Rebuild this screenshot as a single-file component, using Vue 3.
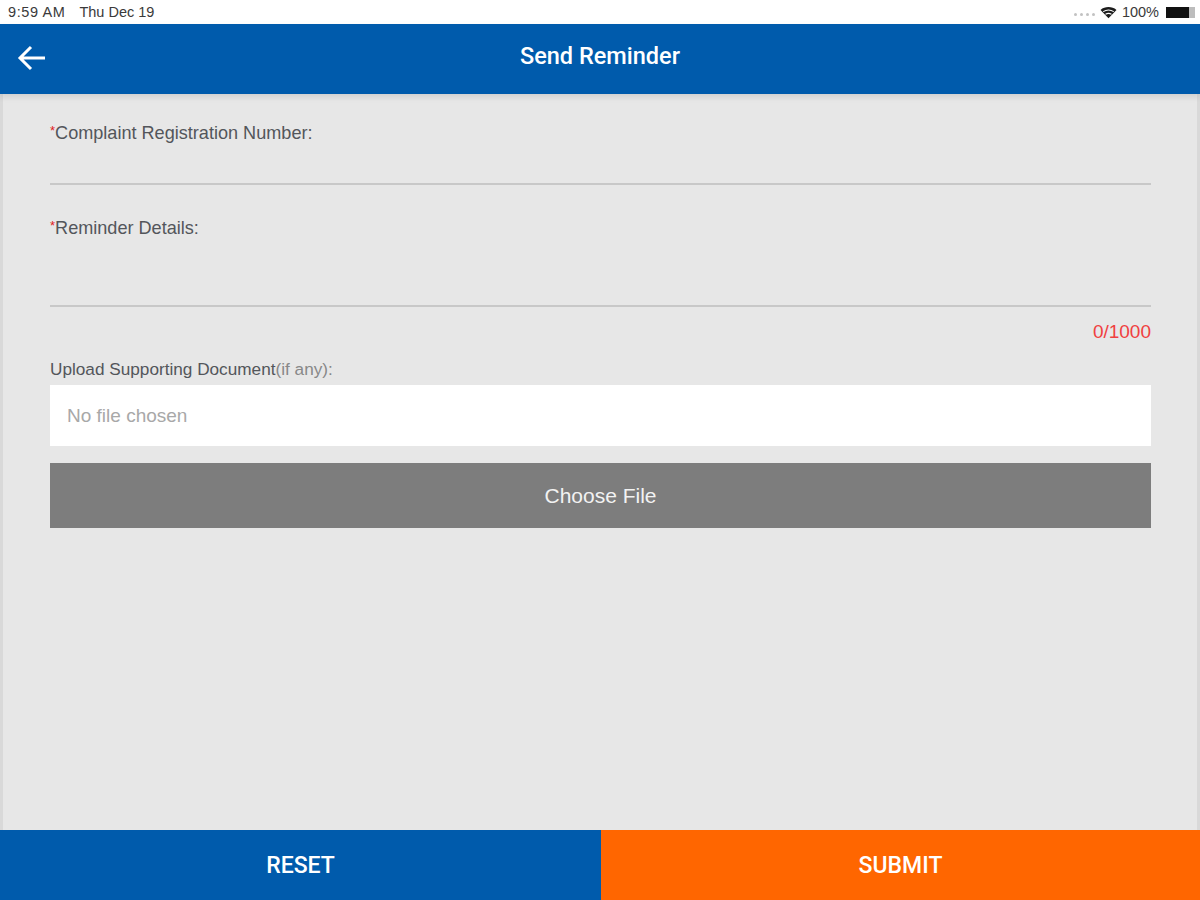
<template>
<div class="screen">
    <div class="status-bar">
        <div class="status-left">
            <span class="time">9:59 AM</span>
            <span>Thu Dec 19</span>
        </div>
        <div class="status-right">
            <span class="signal">
                <i v-for="n in 4" :key="n"></i>
            </span>
            <svg class="wifi" width="17" height="13" viewBox="0 0 16 12">
                <path d="M8 11.5 L0.5 3.6 C4.6 0 11.4 0 15.5 3.6 Z" fill="#1c1c1c" />
                <path d="M3 5.2 C6 3.4 10 3.4 13 5.2" stroke="#fff" stroke-width="1" fill="none" />
                <path d="M5.2 7.6 C7 6.6 9 6.6 10.8 7.6" stroke="#fff" stroke-width="1" fill="none" />
            </svg>
            <span class="percent">100%</span>
            <span class="battery"></span>
        </div>
    </div>

    <header class="top-bar">
        <svg class="back" width="30" height="28" viewBox="0 0 30 28">
            <path d="M28 14 H3 M14 3 L3 14 L14 25" stroke="#fff" stroke-width="3" fill="none" />
        </svg>
        <h1>Send Reminder</h1>
    </header>

    <main class="form">
        <div class="field first">
            <label><b>*</b>Complaint Registration Number:</label>
            <div class="line"></div>
        </div>
        <div class="field second">
            <label><b>*</b>Reminder Details:</label>
            <div class="line"></div>
        </div>
        <p class="counter">0/1000</p>
        <p class="upload-label">Upload Supporting Document<span>(if any):</span></p>
        <div class="file-box">No file chosen</div>
        <button class="choose">Choose File</button>
    </main>

    <footer class="actions">
        <button class="reset">RESET</button>
        <button class="submit">SUBMIT</button>
    </footer>
</div>
</template>

<script setup>
</script>

<style scoped>
.screen {
    width: 1200px;
    height: 900px;
    display: flex;
    flex-direction: column;
    background: #e7e7e7;
    font-family: "Liberation Sans", Arial, sans-serif;
    overflow: hidden;
}

.status-bar {
    height: 24px;
    background: #fff;
    display: flex;
    justify-content: space-between;
    align-items: center;
    padding: 0 5px 0 8px;
    font-size: 14.5px;
    color: #3a3a3a;
    flex-shrink: 0;
}

.status-left {
    display: flex;
    gap: 14px;
}

.time {
    letter-spacing: 0.6px;
}

.status-right {
    display: flex;
    align-items: center;
    gap: 5px;
}

.signal {
    display: flex;
    gap: 3px;
    margin-top: 5px;
}

.signal i {
    width: 3px;
    height: 3px;
    background: #c2c2c2;
    border-radius: 50%;
}

.percent {
    margin-right: 2px;
}

.battery {
    width: 29px;
    height: 11px;
    background: #111;
    border-right: 6px solid #bdbdbd;
    box-sizing: border-box;
}

.top-bar {
    height: 70px;
    background: #005bac;
    display: flex;
    align-items: center;
    justify-content: center;
    position: relative;
    box-shadow: 0 3px 6px rgba(0, 0, 0, 0.1);
    flex-shrink: 0;
}

.top-bar h1 {
    margin: 0 0 6px;
    color: #fff;
    font-family: Roboto, sans-serif;
    font-size: 23.5px;
    font-weight: 500;
}

.back {
    position: absolute;
    left: 17px;
    top: 20px;
}

.form {
    flex: 1;
    padding: 0 46px 0 47px;
    border-left: 3px solid #d9d9d9;
    border-right: 3px solid #d9d9d9;
    display: flex;
    flex-direction: column;
}

.field label {
    display: block;
    font-size: 18.1px;
    color: #53565b;
}

.field b {
    color: #e02020;
    font-weight: 400;
    font-size: 13px;
    vertical-align: 4px;
}

.field.first {
    padding-top: 29px;
}

.field.first .line {
    margin-top: 39px;
}

.field.second {
    padding-top: 33px;
}

.field.second .line {
    margin-top: 66px;
}

.line {
    height: 2px;
    background: #c8c8c8;
}

.counter {
    margin: 14px 0 0;
    text-align: right;
    font-size: 19px;
    color: #f04040;
}

.upload-label {
    margin: 16px 0 5px;
    font-size: 17.2px;
    color: #53565b;
}

.upload-label span {
    color: #888;
}

.file-box {
    height: 61px;
    background: #fff;
    display: flex;
    align-items: center;
    padding-left: 17px;
    font-size: 19px;
    color: #a8a8a8;
}

.choose {
    margin-top: 17px;
    height: 65px;
    background: #7d7d7d;
    border: none;
    color: #f2f2f2;
    font-family: inherit;
    font-size: 21px;
}

.actions {
    height: 70px;
    display: grid;
    grid-template-columns: 601px 599px;
    flex-shrink: 0;
}

.actions button {
    border: none;
    color: #fff;
    font-family: Roboto, sans-serif;
    font-size: 23px;
    font-weight: 500;
}

.reset {
    background: #005bac;
}

.submit {
    background: #ff6600;
}
</style>
